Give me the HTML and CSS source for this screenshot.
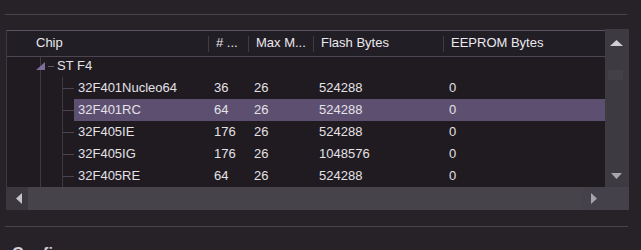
FILE: index.html
```html
<!DOCTYPE html>
<html>
<head>
<meta charset="utf-8">
<link rel="stylesheet" href="styles.css">
</head>
<body>
<div class="sep sep-top"></div>
<div class="tree">
  <div class="frame">
    <div class="header">
      <div class="hcell c0">Chip</div>
      <div class="hcell c1"># ...</div>
      <div class="hcell c2">Max M...</div>
      <div class="hcell c3">Flash Bytes</div>
      <div class="hcell c4">EEPROM Bytes</div>
    </div>
    <div class="viewport">
      <div class="list">
        <div class="row root">
          <div class="branch">
            <svg width="50" height="22" viewBox="0 0 50 22">
              <rect x="33" y="0" width="1" height="22" fill="#3d3a41"/>
              <polygon points="29,15 38,15 38,7" fill="#7d6e9b"/>
              <rect x="41" y="11" width="6" height="1" fill="#5c5762"/>
            </svg>
          </div>
          <div class="cells">
            <div class="cell c0">ST F4</div>
            <div class="cell c1"></div>
            <div class="cell c2"></div>
            <div class="cell c3"></div>
            <div class="cell c4"></div>
          </div>
        </div>
        <div class="row child">
          <div class="branch"></div>
          <div class="cells">
            <div class="cell c0">32F401Nucleo64</div>
            <div class="cell c1">36</div>
            <div class="cell c2">26</div>
            <div class="cell c3">524288</div>
            <div class="cell c4">0</div>
          </div>
        </div>
        <div class="row child">
          <div class="branch"></div>
          <div class="cells selected">
            <div class="cell c0">32F401RC</div>
            <div class="cell c1">64</div>
            <div class="cell c2">26</div>
            <div class="cell c3">524288</div>
            <div class="cell c4">0</div>
          </div>
        </div>
        <div class="row child">
          <div class="branch"></div>
          <div class="cells">
            <div class="cell c0">32F405IE</div>
            <div class="cell c1">176</div>
            <div class="cell c2">26</div>
            <div class="cell c3">524288</div>
            <div class="cell c4">0</div>
          </div>
        </div>
        <div class="row child">
          <div class="branch"></div>
          <div class="cells">
            <div class="cell c0">32F405IG</div>
            <div class="cell c1">176</div>
            <div class="cell c2">26</div>
            <div class="cell c3">1048576</div>
            <div class="cell c4">0</div>
          </div>
        </div>
        <div class="row child">
          <div class="branch"></div>
          <div class="cells">
            <div class="cell c0">32F405RE</div>
            <div class="cell c1">64</div>
            <div class="cell c2">26</div>
            <div class="cell c3">524288</div>
            <div class="cell c4">0</div>
          </div>
        </div>
      </div>
    </div>
  </div>
  <div class="vscroll">
    <svg class="arrow-up" width="13" height="6" viewBox="0 0 13 6"><polygon points="0,6 6.5,0 13,6" fill="#d2ced6"/></svg>
    <div class="vthumb"></div>
    <svg class="arrow-down" width="11" height="6" viewBox="0 0 11 6"><polygon points="0,0 11,0 5.5,6" fill="#aaa6ae"/></svg>
  </div>
  <div class="hscroll">
    <div class="hbtn hbtn-left">
      <svg width="6" height="11" viewBox="0 0 6 11"><polygon points="6,0 6,11 0,5.5" fill="#c6c2ca"/></svg>
    </div>
    <div class="hthumb"></div>
    <div class="hbtn hbtn-right">
      <svg width="6" height="11" viewBox="0 0 6 11"><polygon points="0,0 0,11 6,5.5" fill="#a8a4ac"/></svg>
    </div>
    <div class="corner"></div>
  </div>
</div>
<div class="sep sep-bottom"></div>
<div class="heading">Config</div>
</body>
</html>
```
FILE: styles.css
```css
* { box-sizing: border-box; }

html, body {
  margin: 0;
  padding: 0;
}

body {
  width: 641px;
  height: 250px;
  overflow: hidden;
  background: #262228;
  font-family: "Liberation Sans", Arial, sans-serif;
  font-size: 13px;
  color: #e4e1e7;
}

.sep {
  height: 1px;
  background: #48444c;
  margin-left: 5px;
}

.sep-top {
  margin-top: 14px;
  width: 622px;
}

.tree {
  margin-top: 14px;
  margin-left: 6px;
  width: 623px;
  display: grid;
  grid-template-columns: 599px 24px;
  grid-template-rows: 158px 23px;
}

.frame {
  margin-top: 1px;
  height: 157px;
  border-top: 1px solid #58535f;
  border-left: 1px solid #3d3942;
  display: flex;
  flex-direction: column;
  background: #1f1b20;
}

.header {
  height: 26px;
  flex: none;
  display: flex;
  background: #221e25;
  border-bottom: 1px solid #4b4652;
  color: #ebe8ee;
  position: relative;
  z-index: 1;
}

.hcell {
  line-height: 24px;
  padding-left: 7px;
  white-space: nowrap;
  overflow: hidden;
  background: linear-gradient(#403c44, #403c44) right 5px / 1px 16px no-repeat;
}

.header .c0 { width: 202px; padding-left: 29px; }
.header .c4 { flex: 1; background: none; }

.c1 { width: 40px; }
.c2 { width: 65px; }
.c3 { width: 130px; }

.viewport {
  height: 130px;
  overflow: hidden;
}

.list {
  margin-top: -2px;
}

.row {
  height: 22px;
  display: flex;
}

.branch {
  flex: none;
  height: 22px;
}

.root .branch { width: 50px; }
.root .branch svg { display: block; }

.child .branch {
  width: 67px;
  background:
    linear-gradient(#3d3a41, #3d3a41) 33px 0 / 1px 100% no-repeat,
    linear-gradient(#3d3a41, #3d3a41) 55px 0 / 1px 100% no-repeat,
    linear-gradient(#4a4650, #4a4650) 56px 11px / 11px 1px no-repeat;
}

.cells {
  flex: 1;
  display: flex;
  line-height: 22px;
}

.cells.selected {
  background: #5d4f70;
}

.cell {
  padding-left: 5px;
  white-space: nowrap;
  overflow: hidden;
}

.root .c0 { width: 152px; padding-left: 0; }
.child .c0 { width: 135px; padding-left: 4px; }
.cell.c4 { flex: 1; }

.vscroll {
  grid-row: 1;
  grid-column: 2;
  background: #3e3a42;
  display: flex;
  flex-direction: column;
}

.arrow-up {
  display: block;
  margin: 11px 0 0 5px;
}

.vthumb {
  width: 15px;
  height: 10px;
  margin: 24px 0 0 3px;
  background: #444048;
}

.arrow-down {
  display: block;
  margin: auto 0 8px 6px;
}

.hscroll {
  grid-row: 2;
  grid-column: 1 / span 2;
  display: flex;
  background: #45414a;
}

.hbtn {
  width: 22px;
  display: flex;
  align-items: center;
}

.hbtn-left {
  background: #3b373f;
  padding-left: 10px;
}

.hbtn-right {
  padding-left: 8px;
}

.hthumb {
  flex: 1;
  background: #47434b;
}

.corner {
  width: 24px;
}

.sep-bottom {
  margin-top: 16px;
  width: 623px;
}

.heading {
  margin: 17px 0 0 12px;
  font-size: 16px;
  font-weight: bold;
  color: #d4cfda;
  line-height: 20px;
}
```
